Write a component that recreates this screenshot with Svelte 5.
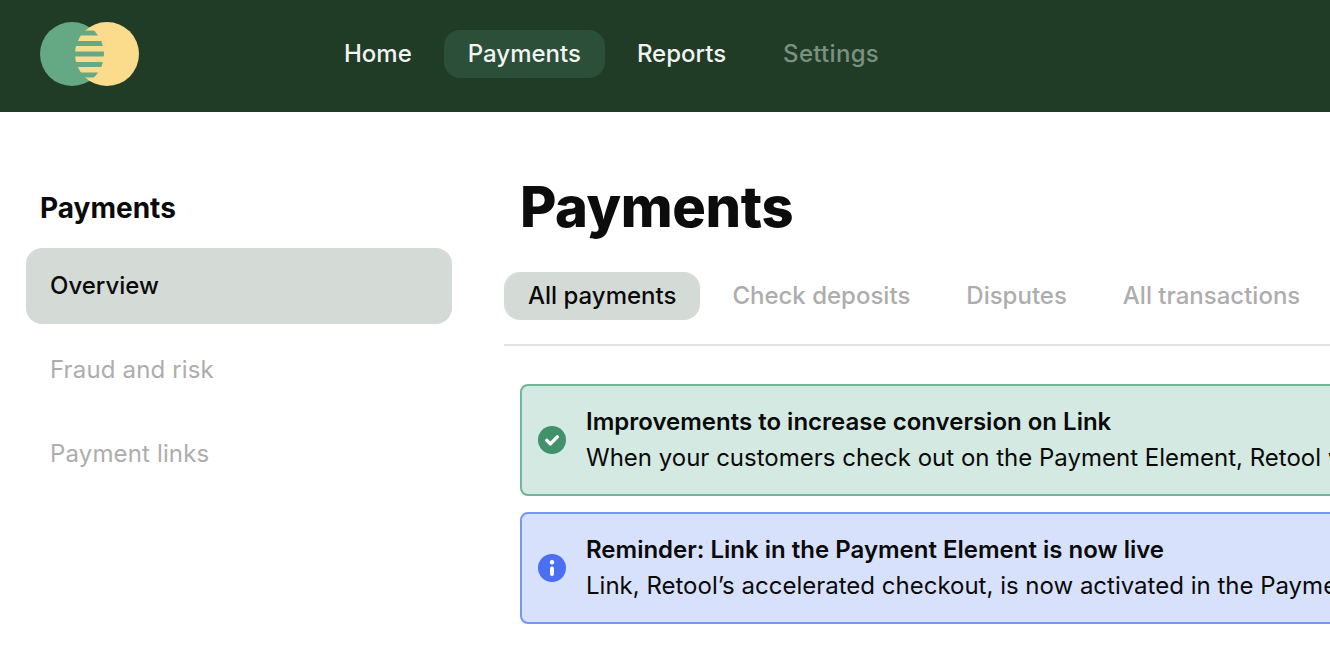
<script>
	const navItems = [
		{ label: 'Home' },
		{ label: 'Payments', active: true },
		{ label: 'Reports' },
		{ label: 'Settings', muted: true }
	];
	const sideItems = [
		{ label: 'Overview', active: true },
		{ label: 'Fraud and risk' },
		{ label: 'Payment links' }
	];
	const tabs = [
		{ label: 'All payments', active: true },
		{ label: 'Check deposits' },
		{ label: 'Disputes' },
		{ label: 'All transactions' }
	];
	const stripes = [8.5, 19, 29.5, 40, 50.5];
</script>

<header class="topbar">
	<svg class="logo" width="100" height="64" viewBox="0 0 100 64" aria-hidden="true">
		<defs>
			<clipPath id="lens">
				<circle cx="32" cy="32" r="32" />
			</clipPath>
		</defs>
		<circle cx="32" cy="32" r="32" fill="#64a884" />
		<circle cx="67" cy="32" r="32" fill="#fadc8c" />
		<g clip-path="url(#lens)">
			{#each stripes as y}
				<rect x="30" {y} width="40" height="5" fill="#64a884" />
			{/each}
		</g>
	</svg>
	<nav class="nav">
		{#each navItems as item}
			<a class="nav-item" class:active={item.active} class:muted={item.muted} href="#top">{item.label}</a>
		{/each}
	</nav>
</header>

<div class="page">
	<aside class="sidebar">
		<h2>Payments</h2>
		<ul>
			{#each sideItems as item}
				<li class:active={item.active}>{item.label}</li>
			{/each}
		</ul>
	</aside>

	<main class="content">
		<h1>Payments</h1>
		<div class="tabs">
			{#each tabs as tab}
				<span class="tab" class:active={tab.active}>{tab.label}</span>
			{/each}
		</div>
		<div class="alerts">
			<section class="alert success">
				<svg width="28" height="28" viewBox="0 0 28 28" aria-hidden="true">
					<circle cx="14" cy="14" r="14" fill="#40916c" />
					<path d="M8.8 14.4l3.6 3.5 6.9-7" fill="none" stroke="#fff" stroke-width="3.4" stroke-linecap="round" stroke-linejoin="round" />
				</svg>
				<div>
					<p class="title">Improvements to increase conversion on Link</p>
					<p>When your customers check out on the Payment Element, Retool will show Link to returning users</p>
				</div>
			</section>
			<section class="alert info">
				<svg width="28" height="28" viewBox="0 0 28 28" aria-hidden="true">
					<circle cx="14" cy="14" r="14" fill="#4a6ff0" />
					<circle cx="14" cy="8.3" r="2.2" fill="#fff" />
					<rect x="12" y="12.5" width="4" height="9.5" rx="2" fill="#fff" />
				</svg>
				<div>
					<p class="title">Reminder: Link in the Payment Element is now live</p>
					<p>Link, Retool’s accelerated checkout, is now activated in the Payment Element for your account</p>
				</div>
			</section>
		</div>
	</main>
</div>

<style>
	:global(body) {
		overflow: hidden;
		background: #fff;
		font-family: Inter, 'Noto Sans', sans-serif;
		color: #0a0a0a;
	}

	.topbar {
		display: flex;
		align-items: center;
		height: 108px;
		padding: 0 0 4px 40px;
		background: #203c27;
	}

	.logo {
		flex: none;
	}

	.nav {
		display: flex;
		gap: 8px;
		margin-left: 180px;
	}

	.nav-item {
		padding: 0 24px;
		border-radius: 16px;
		color: #f2f4f2;
		font-size: 24px;
		font-weight: 500;
		line-height: 48px;
		text-decoration: none;
	}

	.nav-item.active {
		background: #2b4f38;
	}

	.nav-item.muted {
		margin-left: 1px;
		color: #7a9180;
		letter-spacing: 0.3px;
	}

	.page {
		display: flex;
		width: 1800px;
		padding: 64px 0 0 26px;
	}

	.sidebar {
		flex: none;
		width: 426px;
	}

	h2 {
		margin: 0 0 20px 14px;
		font-size: 28px;
		font-weight: 700;
		line-height: 64px;
		height: 52px;
	}

	ul {
		display: flex;
		flex-direction: column;
		gap: 8px;
		margin: 0;
		padding: 0;
		list-style: none;
	}

	li {
		padding: 0 24px;
		border-radius: 16px;
		color: #adadad;
		font-size: 24px;
		letter-spacing: 0.15px;
		line-height: 76px;
	}

	li.active {
		background: #d4dbd7;
		color: #0a0a0a;
		font-weight: 500;
		letter-spacing: 0;
	}

	.content {
		flex: 1;
		margin-left: 52px;
	}

	h1 {
		margin: 0 0 0 16px;
		padding-bottom: 2px;
		color: #0c0c0c;
		font-size: 56px;
		font-weight: 800;
		letter-spacing: -0.4px;
		line-height: 62px;
	}

	.tabs {
		display: flex;
		gap: 8px;
		margin-top: 32px;
		padding-bottom: 24px;
		border-bottom: 2px solid #e2e2e2;
	}

	.tab {
		padding: 0 24px;
		border-radius: 16px;
		color: #adadad;
		font-size: 24px;
		font-weight: 500;
		line-height: 48px;
	}

	.tab.active {
		background: #d4dbd7;
		color: #0a0a0a;
	}

	.alerts {
		display: flex;
		flex-direction: column;
		gap: 16px;
		margin: 38px 0 0 16px;
	}

	.alert {
		display: flex;
		align-items: center;
		gap: 20px;
		height: 112px;
		box-sizing: border-box;
		padding-left: 16px;
		border: 2px solid;
		border-radius: 8px;
	}

	.alert svg {
		flex: none;
	}

	.success {
		border-color: #6fb598;
		background: #d4e9e1;
	}

	.info {
		border-color: #7496f5;
		background: #d8e1fb;
	}

	p {
		margin: 0;
		font-size: 24px;
		line-height: 36px;
		white-space: nowrap;
	}

	.title {
		font-weight: 600;
	}
</style>
